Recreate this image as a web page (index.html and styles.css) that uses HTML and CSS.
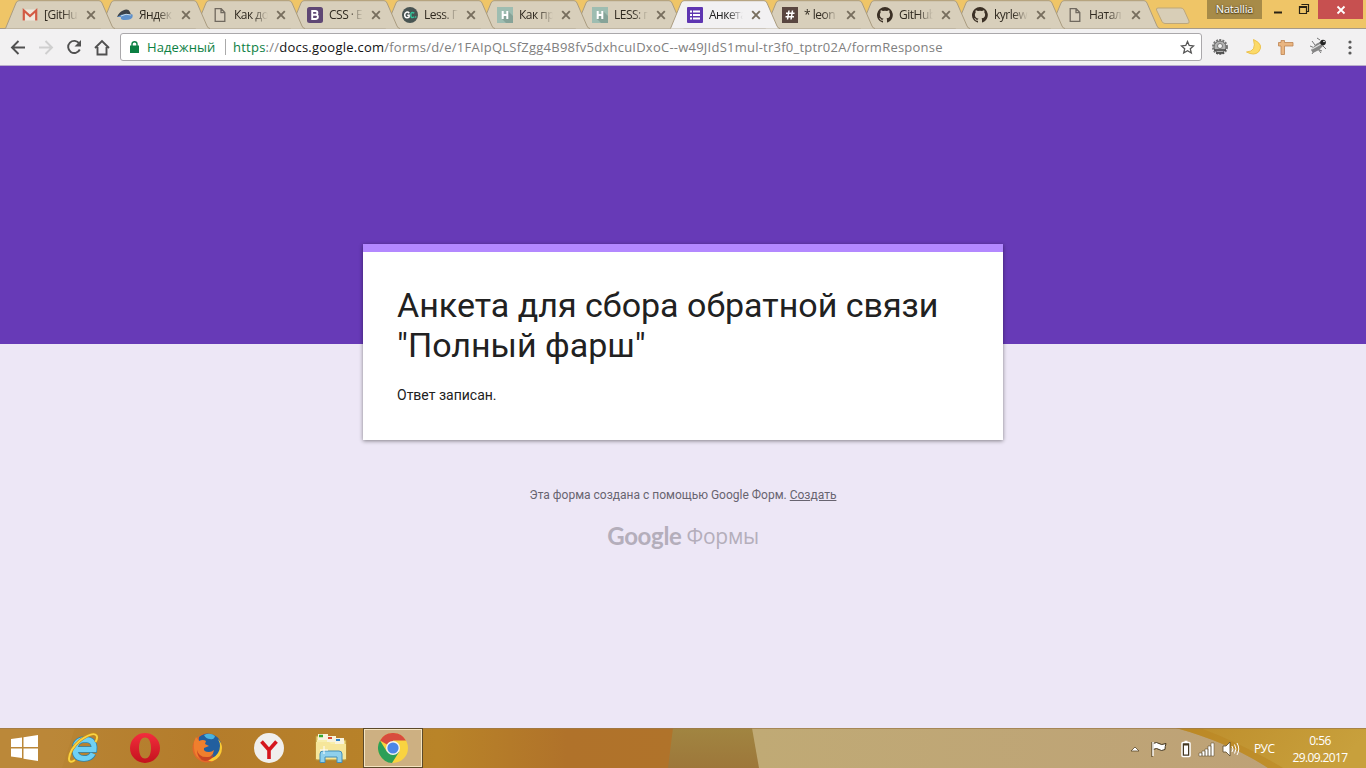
FILE: index.html
```html
<!DOCTYPE html>
<html lang="ru">
<head>
<meta charset="utf-8">
<title>Анкета для сбора обратной связи</title>
<link rel="stylesheet" href="styles.css">
</head>
<body>
<svg class="defs" width="0" height="0">
  <symbol id="shape" viewBox="0 0 110 29"><path d="M.5 28.5 L11 3 Q12 .7 14 .7 H94 Q96 .7 97 3 L107 26 Q108 28.5 110 28.5" /></symbol>
  <symbol id="x" viewBox="0 0 10 10"><path d="M1.2 1.2l7.6 7.6M8.800 1.200L1.200 8.800" fill="none" stroke="#776e5e" stroke-width="1.900"/></symbol>
  <symbol id="page" viewBox="0 0 16 16"><path d="M3.200 1.700h6l3.600 3.800v8.800H3.200zM9 1.900v3.800h3.600" fill="#dad1bf" stroke="#70695f" stroke-width="1.300"/></symbol>
  <symbol id="hexlet" viewBox="0 0 16 16"><path d="M0 0h16v16H0z" fill="#9ebdb1"/><path d="M11 4l5 5v7H9l-4-4z" fill="#86a398"/><path d="M5.700 4v8M10.300 4v8M5.700 8h5" stroke="#fff" stroke-width="2"/></symbol>
  <symbol id="github" viewBox="0 0 16 16"><path fill="#3b3025" d="M8 0a8 8 0 0 0-2.500 15.600c.4.1.5-.2.5-.4v-1.500c-2.200.5-2.700-.9-2.700-.9-.4-.9-.9-1.200-.9-1.200-.7-.5.1-.5.1-.5.8.1 1.200.8 1.200.8.7 1.200 1.900.9 2.300.7.1-.5.3-.9.5-1.100-1.800-.2-3.600-.9-3.600-4 0-.9.300-1.600.8-2.100-.1-.2-.4-1 .1-2.100 0 0 .7-.2 2.200.8a7.500 7.500 0 0 1 4 0c1.500-1 2.200-.8 2.200-.8.4 1.100.2 1.900.1 2.100.5.600.8 1.300.8 2.100 0 3.100-1.900 3.700-3.600 3.900.3.300.5.800.5 1.500v2.200c0 .2.100.5.600.4A8 8 0 0 0 8 0z"/></symbol>
</svg>
<header class="tabs">
  <div class="tab t0"><svg class="shape"><use href="#shape"/></svg><svg class="fav" viewBox="0 0 16 16"><path d="M1 2.500h14v11H1z" fill="#efe7dc"/><path d="M1.800 13.500V3.500L8 9l6.200-5.500v10" fill="none" stroke="#d35a44" stroke-width="2.200"/></svg><span class="name">[GitHu</span><svg class="x"><use href="#x"/></svg></div>
  <div class="tab t1"><svg class="shape"><use href="#shape"/></svg><svg class="fav" viewBox="0 0 16 16"><path d="M0 10Q6 4 15.500 7.500 17 13 8 13 3 13 4 10z" fill="#5f91cb"/><path d="M0 10Q2 5 6 3.500 11 1 13 5L14 8Q7 5 0 10z" fill="#3c4248"/><path d="M4 9Q9 6 14 8" stroke="#c7dceb" fill="none"/></svg><span class="name">Яндек</span><svg class="x"><use href="#x"/></svg></div>
  <div class="tab t2"><svg class="shape"><use href="#shape"/></svg><svg class="fav"><use href="#page"/></svg><span class="name">Как до</span><svg class="x"><use href="#x"/></svg></div>
  <div class="tab t3"><svg class="shape"><use href="#shape"/></svg><svg class="fav" viewBox="0 0 16 16"><rect width="16" height="16" rx="2.500" fill="#5f4774"/><path d="M5.200 4v8h3.200q2.500 0 2.500-2.200T8.400 7.800H5.200h3q2.200 0 2.200-1.900T8.200 4z" fill="none" stroke="#fff" stroke-width="1.900"/></svg><span class="name">CSS · E</span><svg class="x"><use href="#x"/></svg></div>
  <div class="tab t4"><svg class="shape"><use href="#shape"/></svg><svg class="fav" viewBox="0 0 16 16"><circle cx="8" cy="8" r="8" fill="#485452"/><path d="M7.300 6.200Q6 4.700 4.400 5.200 2.600 6 2.700 8q.1 2.600 2.200 2.700 1.500.1 2.200-.7V8.200H5.300" fill="none" stroke="#fff" stroke-width="1.500"/><path d="M12.300 6.200Q8.800 4 8.800 8t3.500 1.900M13 10h1.300" fill="none" stroke="#31c49b" stroke-width="1.500"/></svg><span class="name">Less. Г</span><svg class="x"><use href="#x"/></svg></div>
  <div class="tab t5"><svg class="shape"><use href="#shape"/></svg><svg class="fav"><use href="#hexlet"/></svg><span class="name">Как пр</span><svg class="x"><use href="#x"/></svg></div>
  <div class="tab t6"><svg class="shape"><use href="#shape"/></svg><svg class="fav"><use href="#hexlet"/></svg><span class="name">LESS: г</span><svg class="x"><use href="#x"/></svg></div>
  <div class="tab active"><svg class="shape"><use href="#shape"/></svg><svg class="fav" viewBox="0 0 16 16"><rect width="16" height="16" rx="1" fill="#5e35b1"/><path d="M3 4.500h2M3 8h2M3 11.500h2M6 4.500h7M6 8h7M6 11.500h7" stroke="#fff" stroke-width="1.800"/></svg><span class="name">Анкета</span><svg class="x"><use href="#x"/></svg></div>
  <div class="tab t8"><svg class="shape"><use href="#shape"/></svg><svg class="fav" viewBox="0 0 16 16"><path d="M0 0h16v16H0z" fill="#594640"/><path d="M7 3.500L5.500 12.500M10.500 3.500L9 12.500M4 6.300h8.500M3.500 9.800H12" stroke="#fff" stroke-width="1.500"/></svg><span class="name">* leon</span><svg class="x"><use href="#x"/></svg></div>
  <div class="tab t9"><svg class="shape"><use href="#shape"/></svg><svg class="fav"><use href="#github"/></svg><span class="name">GitHub</span><svg class="x"><use href="#x"/></svg></div>
  <div class="tab t10"><svg class="shape"><use href="#shape"/></svg><svg class="fav"><use href="#github"/></svg><span class="name">kyrlew</span><svg class="x"><use href="#x"/></svg></div>
  <div class="tab t11"><svg class="shape"><use href="#shape"/></svg><svg class="fav"><use href="#page"/></svg><span class="name">Натал</span><svg class="x"><use href="#x"/></svg></div>
  <svg class="newtab" viewBox="0 0 36 18"><path d="M3 1h23q2 0 3 2l5 11q1 2.500-2 2.500H10q-2 0-3-2L1.500 3Q1 1 3 1z" fill="#d8ceb7" stroke="#bda77b"/></svg>
  <div class="window">
    <span class="user">Natallia</span>
    <svg class="wbtn" width="56" height="28" viewBox="0 0 56 28"><path d="M12 12.500h8" stroke="#2a2314" stroke-width="2"/><path d="M37.500 6.500h7v7h-7zM40 5V4.500h6.500v7H45" fill="none" stroke="#2a2314" stroke-width="1.200"/><path d="M37 7h8" stroke="#2a2314" stroke-width="2"/></svg>
    <div class="close"><svg width="10" height="10" viewBox="0 0 10 10"><path d="M1.500 1.500l7 7M8.500 1.500l-7 7" stroke="#fff" stroke-width="1.800"/></svg></div>
  </div>
</header>
<nav class="toolbar">
  <svg class="nav" width="120" height="36" viewBox="0 0 120 36" fill="none" stroke="#505050" stroke-width="1.900"><path d="M25 18.500H12.500M18.500 12L12 18.500l6.500 6.500"/><path d="M39 18.500h12.500M45.500 12l6.500 6.500-6.500 6.500" stroke="#cfcfcf"/><path d="M79.300 14.500A6.100 6.100 0 1 0 79.800 20.500"/><path d="M81 11v6.500h-6.500z" fill="#505050" stroke="none"/><path d="M95 19l7-7 7 7M97.500 18v7.500h9V18"/></svg>
  <div class="address">
    <svg width="9" height="12" viewBox="0 0 9 12"><path d="M0 4.500h9V12H0z" fill="#0b8043"/><path d="M2 5V3a2.500 2.300 0 0 1 5 0v2" fill="none" stroke="#0b8043" stroke-width="1.400"/></svg>
    <span class="secure">Надежный</span><span class="sep"></span>
    <span class="url"><i>https</i>://<b>docs.google.com</b>/forms/d/e/1FAIpQLSfZgg4B98fv5dxhcuIDxoC--w49JIdS1mul-tr3f0_tptr02A/formResponse</span>
    <svg class="star" width="15" height="15" viewBox="0 0 15 15"><path d="M7.500 1.500l1.700 4 4.300.4-3.200 2.900 1 4.200-3.800-2.300L3.700 13l1-4.200L1.500 5.900l4.300-.4z" fill="none" stroke="#555" stroke-width="1.300"/></svg>
  </div>
  <svg class="ext" width="164" height="36" viewBox="0 0 164 36">
    <circle cx="18" cy="18" r="7" fill="none" stroke="#777" stroke-width="2" stroke-dasharray="2 1.200"/><circle cx="18" cy="18" r="6" fill="#b2b2b2" stroke="#666"/><circle cx="18" cy="17" r="2.500" fill="#f4f4f4" stroke="#777"/><path d="M12 21h12M14 24h8" stroke="#444" stroke-width="1.400"/>
    <path d="M51.500 10.500q11 5 5 12.500-4.500 4-12 0 10.500-.5 7-12.500z" fill="#fcda68" stroke="#edc24a"/>
    <path d="M79 11.500h3.500v2H91v3.500h-8.500V25.500H79V17h-2.500v-3.500H79z" fill="#e9b581" stroke="#bd8450" stroke-width=".8"/>
    <path d="M108 17l12 5M110 12l9 12M110 25l8-12M118 11l-3-2M121 17l3 3" stroke="#666" stroke-width=".9"/><path d="M109 21l5-6 6-3 2 4-5 5-6 3z" fill="#858585"/><path d="M110 20l9-5" stroke="#ddd" stroke-width="1.200"/><circle cx="121" cy="13.500" r="2.800" fill="#242424"/><circle cx="122" cy="12.500" r=".8" fill="#fff"/>
    <g fill="#5a5a5a"><circle cx="148" cy="13" r="1.600"/><circle cx="148" cy="18.500" r="1.600"/><circle cx="148" cy="24" r="1.600"/></g>
  </svg>
</nav>
<main class="content">
  <section class="card">
    <h1>Анкета для сбора обратной связи<br>"Полный фарш"</h1>
    <p>Ответ записан.</p>
  </section>
  <p class="credit">Эта форма создана с помощью Google Форм. <a>Создать</a></p>
  <div class="logo"><span class="google">Google</span><span class="forms">Формы</span></div>
</main>
<footer class="taskbar">
  <svg class="wall" width="1366" height="40" viewBox="0 0 1366 40">
    <defs><linearGradient id="wa"><stop offset="0" stop-color="#b98737"/><stop offset=".3" stop-color="#b47c2b"/><stop offset=".65" stop-color="#b98428"/><stop offset=".84" stop-color="#b0722a"/><stop offset="1" stop-color="#b0732a"/></linearGradient><linearGradient id="wb"><stop offset="0" stop-color="#c0aa75"/><stop offset="1" stop-color="#bda077"/></linearGradient><linearGradient id="wc" x2="1" y2=".2"><stop offset="0" stop-color="#bd8d2b"/><stop offset="1" stop-color="#c8a03c"/></linearGradient><linearGradient id="wd" x2="0" y2="1"><stop offset="0" stop-color="#a18541"/><stop offset="1" stop-color="#9d773a"/></linearGradient></defs>
    <path d="M0 0h675v40H0z" fill="url(#wa)"/><path d="M0 0h75L62 40H0z" fill="#bd8a3b" opacity=".5"/><path d="M673 0h80l7 40h-92z" fill="url(#wd)"/><path d="M752 0h614v40H759z" fill="url(#wb)"/><path d="M1176 0h190v40h-98Q1230 15 1176 0z" fill="url(#wc)"/><path d="M1176 0h24q45 17 83 40h-15Q1230 15 1176 0z" fill="#b9841f" opacity=".5"/><path d="M0 .5h1366" stroke="#9c7a4b" opacity=".7"/>
  </svg>
  <div class="apps">
    <svg class="app win" width="27" height="26" viewBox="0 0 27 26"><path d="M0 4l11-1.500V12H0zM12.500 2.200L27 0v12H12.500zM0 13.500h11V23L0 21.500zM12.500 13.500H27V26l-14.500-2.200z" fill="#fff"/></svg>
    <svg class="app ie" width="32" height="32" viewBox="0 0 32 32"><g fill="none"><path d="M9.500 17.500H27Q28 7.500 18 7.500 8 8 8 17.500 8 26.500 17 26.500q6.500 0 9-5" stroke="#2c82ad" stroke-width="6.500"/><path d="M9.500 17.500H27Q28 7.500 18 7.500 8 8 8 17.500 8 26.500 17 26.500q6.500 0 9-5" stroke="#6fd0f4" stroke-width="5"/><path d="M8 28Q2 32 2 26.500 3 17 13 8.500 26-1 29.500 3.500 31 6 28.500 10" stroke="#c58d17" stroke-width="3"/><path d="M8 28Q2 32 2 26.500 3 17 13 8.500 26-1 29.500 3.500 31 6 28.500 10" stroke="#fad344" stroke-width="1.900"/></g></svg>
    <svg class="app opera" width="30" height="30" viewBox="0 0 30 30"><defs><linearGradient id="op" x2="0" y2="1"><stop stop-color="#f32d3d"/><stop offset="1" stop-color="#c4121d"/></linearGradient></defs><path fill="url(#op)" fill-rule="evenodd" d="M15 0a15 15 0 1 0 0 30 15 15 0 1 0 0-30zm0 4.500c4 0 6 4.800 6 10.500s-2 10.500-6 10.500S9 20.700 9 15 11 4.500 15 4.500z"/></svg>
    <svg class="app fox" width="30" height="30" viewBox="0 0 30 30"><circle cx="15" cy="15" r="14.500" fill="#e2682a"/><path d="M7 4Q14-2 22 2q8 4 7 12-1 9-10 11-7 0-8-6Q6 12 7 4z" fill="#225f9f"/><path d="M12 2q6-3 11 1-1 4-5 3-4 0-6-4z" fill="#4ab3de"/><path d="M26 6q4 7 0 14-4 6-11 6 2 3 6 2 9-4 9-13 0-5-4-9z" fill="#f9cb34"/><path d="M2 9l2-5 3 4q4-2 7 0l-1 3 4 2-5 2q-1 4 5 4 3 0 5-2-1 9-12 9Q1 25 2 9z" fill="#f07f2d"/><path d="M5 17q2 8 11 7 4 0 6-3-2 7-9 7Q5 26 5 17z" fill="#c94522"/></svg>
    <svg class="app yandex" width="30" height="30" viewBox="0 0 30 30"><circle cx="15" cy="15" r="15" fill="#f0efed"/><path d="M7.500 8.500L15 17l7.500-8.500M15 16.500V26" fill="none" stroke="#d5161d" stroke-width="3.600"/></svg>
    <svg class="app folder" width="32" height="31" viewBox="0 0 32 31"><path d="M1 3h9l2 2h8l2 2h9v20H1z" fill="#f1dc84" stroke="#b8963d"/><path d="M2 7h10l2 2h8l2 2h6v15H2z" fill="#f8eeac"/><path d="M3 1h10v6H3zM12 3h9v6h-9zM20 5h9v6h-9z" fill="#f7f3dd"/><path d="M4 3h4" stroke="#35a72c" stroke-width="2.500"/><path d="M13 5h4" stroke="#d84834" stroke-width="2"/><path d="M21 7h4" stroke="#2d81c9" stroke-width="2"/><path d="M1 9h13l2 2h15v15H1z" fill="#f6e69a"/><path d="M5 29.500V21q0-3 3-3h16q3 0 3 3v8.500h-5V24H10v5.500z" fill="#8fd0ec" stroke="#438eb9"/><path d="M5 17h8M9 13v8" stroke="#fff"/></svg>
    <div class="running"><svg width="30" height="30" viewBox="0 0 30 30"><circle cx="15" cy="15" r="15" fill="#f9d341"/><path d="M15 15L2 7.500A15 15 0 0 1 28 7.500H15z" fill="#d84c3e"/><path d="M2 7.500A15 15 0 0 0 14 30l7-11-6-4-6.200 3.500z" fill="#2c9f58"/><circle cx="15" cy="15" r="7" fill="#f5f4ee"/><circle cx="15" cy="15" r="5.600" fill="#4c86e8"/></svg></div>
  </div>
  <div class="tray">
    <svg width="114" height="20" viewBox="0 0 114 20"><path d="M1 12l4-4 4 4z" fill="#fff" stroke="#5c4a2c" stroke-width=".8"/><path d="M22 3v15M23 4.500q4-2 6 0t7 0q-1 3-1 6-4 2-6 0t-6 0z" fill="#fff" stroke="#3f321c" stroke-width="1"/><path d="M23 3v14" stroke="#fff" stroke-width="1.400"/><rect x="52" y="3.500" width="8" height="14" rx="1" fill="#453822" stroke="#fff" stroke-width="1.500"/><path d="M54.500 2.500h3" stroke="#fff" stroke-width="1.500"/><path d="M54 6.500h4v9h-4z" fill="#fff"/><g fill="#fff" stroke="#4c3d22" stroke-width=".5"><path d="M69 14h3v3h-3zM72 12h3v5h-3zM75 10h3v7h-3zM78 7h3v10h-3zM81 4h3v13h-3z"/></g><path d="M93 7h3l4-4v14l-4-4h-3z" fill="#fff" stroke="#58472a" stroke-width=".8"/><path d="M102 7q2 3 0 6M104.500 5.500q3 4.500 0 9M107 4q3.500 6 0 12" fill="none" stroke="#fff" stroke-width="1"/></svg>
    <span class="lang">РУС</span><div class="clock"><span>0:56</span><span>29.09.2017</span></div>
  </div>
</footer>
</body>
</html>
```
FILE: styles.css
```css
* { box-sizing: border-box; }
body { margin: 0; width: 1366px; height: 768px; overflow: hidden; display: flex; flex-direction: column; font-family: Roboto, sans-serif; }
svg { display: block; flex: none; }
.defs { position: absolute; }
.tabs { height: 29px; background: #efc567; display: flex; padding-left: 5px; position: relative; border-bottom: 1px solid #a69a88; font-family: "Open Sans", "Noto Sans", sans-serif; }
.tab { width: 95px; flex: none; height: 29px; position: relative; display: flex; padding: 7px 0 0 17px; color: #302a20; }
.shape { position: absolute; left: 0; top: 0; width: 110px; height: 29px; fill: #d8cfbb; stroke: #aa9c80; stroke-width: 1; z-index: -1; }
.tab { isolation: isolate; z-index: 1; }
.t0 { z-index: 14; } .t1 { z-index: 13; } .t2 { z-index: 12; } .t3 { z-index: 11; } .t4 { z-index: 10; } .t5 { z-index: 9; } .t6 { z-index: 8; } .t8 { z-index: 6; } .t9 { z-index: 5; } .t10 { z-index: 4; } .t11 { z-index: 3; }
.active { z-index: 20; color: #222; }
.active .shape { fill: #f2f1f2; }
.fav { width: 16px; height: 16px; margin-right: 6px; }
.name { width: 34px; height: 18px; white-space: nowrap; font-size: 12px; line-height: 16px; letter-spacing: -.5px; -webkit-mask-image: linear-gradient(90deg, #000 55%, transparent); mask-image: linear-gradient(90deg, #000 55%, transparent); }
.x { width: 10px; height: 10px; margin: 3px 0 0 8px; }
.newtab { width: 36px; height: 18px; margin: 7px 0 0 10px; }
.window { display: flex; margin-left: auto; height: 28px; }
.user { width: 55px; height: 19px; background: #a78b48; color: #fff; font-size: 11px; line-height: 18px; text-align: center; letter-spacing: -.2px; text-shadow: 0 1px 1px #493a18, 0 0 2px #493a18; }
.close { width: 45px; height: 19px; background: #c75050; display: flex; align-items: center; justify-content: center; margin-right: 3px; }
.toolbar { height: 37px; background: #f2f1f2; border-bottom: 1px solid #b9adcc; display: flex; font-family: "Open Sans", "Noto Sans", sans-serif; }
.address { width: 1082px; height: 28px; margin-top: 4px; border: 1px solid #aaa8ab; border-radius: 3px; background: #fff; display: flex; align-items: center; padding: 0 6px 0 9px; font-size: 13px; }
.secure { color: #0b8043; margin-left: 8px; width: 69px; letter-spacing: .1px; white-space: nowrap; }
.sep { width: 1px; height: 16px; background: #aaa; margin: 0 7px 0 9px; }
.url { color: #808080; white-space: nowrap; letter-spacing: .235px; }
.url i { font-style: normal; color: #0b8043; }
.url b { font-weight: 400; color: #111; }
.star { margin-left: auto; }
.content { height: 662px; background: linear-gradient(#673ab7 278px, #ede7f6 278px); display: flex; flex-direction: column; align-items: center; padding-top: 178px; }
.card { width: 640px; height: 196px; background: #fff; border-top: 8px solid #b388ff; box-shadow: 0 1px 4px rgba(0,0,0,.45); padding: 33px 34px; color: #212121; }
h1 { margin: 0; font-size: 34px; line-height: 40px; font-weight: 400; white-space: nowrap; }
.card p { margin: 20px 0 0; font-size: 14px; line-height: 20px; }
.credit { margin: 47px 0 0; font-size: 12px; line-height: 16px; color: #686470; }
.credit a { text-decoration: underline; }
.logo { display: flex; gap: 5px; margin-top: 20px; line-height: 26px; color: #b4aebb; font-family: Lato, sans-serif; font-size: 24px; }
.google { font-weight: 700; letter-spacing: -.3px; }
.forms { font-family: "Open Sans", sans-serif; font-weight: 400; font-size: 21px; letter-spacing: -.3px; }
.taskbar { height: 40px; position: relative; display: flex; justify-content: space-between; color: #fff; font-family: "Open Sans", "Noto Sans", sans-serif; }
.wall { position: absolute; inset: 0; z-index: -1; }
.apps { display: flex; align-items: center; padding-left: 11px; }
.win { margin-right: 29px; } .ie { margin-right: 31px; } .opera { margin-right: 32px; } .fox { margin-right: 32px; } .yandex { margin-right: 31px; } .folder { margin-right: 16px; }
.running { width: 60px; height: 40px; border: 1px solid #5c4929; box-shadow: inset 0 0 0 1px #f5e4c0; background: #cdb082; display: flex; align-items: center; justify-content: center; }
.tray { display: flex; align-items: center; padding: 1px 18px 0 0; font-size: 12px; }
.lang { margin-left: 10px; width: 23px; letter-spacing: -.6px; }
.clock { margin-left: 15px; width: 56px; display: flex; flex-direction: column; align-items: center; line-height: 17px; letter-spacing: -.6px; }
```
